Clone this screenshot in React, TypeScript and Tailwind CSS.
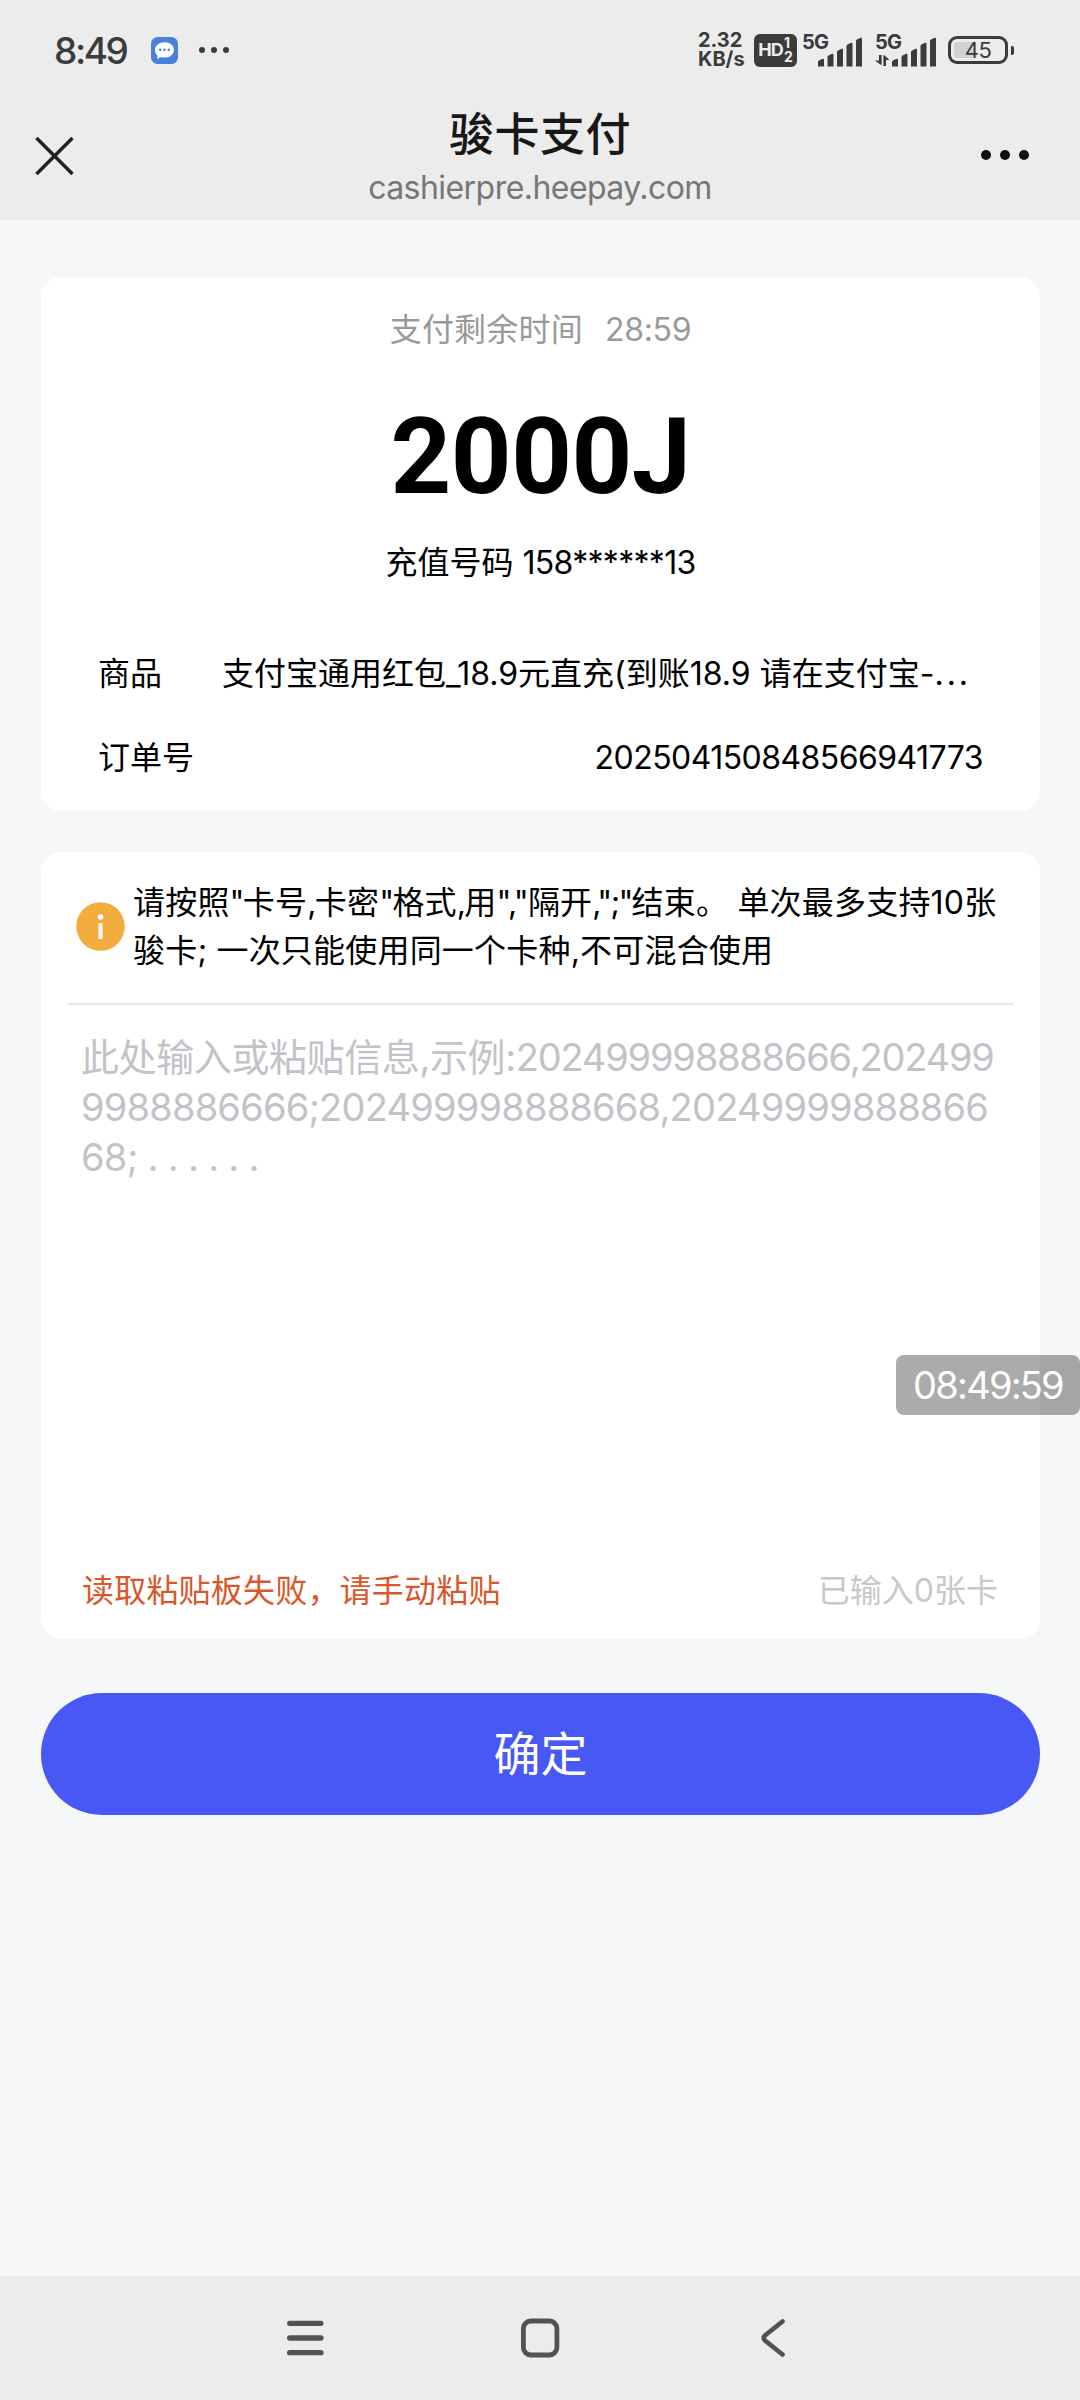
import type { ReactNode } from 'react'

const ORDER = {
  countdown: '28:59',
  amount: '2000J',
  account: '158******13',
  orderNo: '202504150848566941773',
}

const BARS = [7, 12, 17, 23, 28]

function SignalBars() {
  return (
    <svg width="44" height="30" viewBox="0 0 44 30" fill="#3b3b3b">
      {BARS.map((h, i) => (
        <path key={h} d={`M${i * 9.5} 29v${-(h - 3)}q0-1 1-1.6l3.6-1.6q1.4-.4 1.4 1V29q0 .5-.5.5h-5q-.5 0-.5-.5z`} />
      ))}
    </svg>
  )
}

// Ponctuation latine resserrée entre les caractères chinois
function P({ children }: { children: ReactNode }) {
  return <span className="tracking-[-1.7px]">{children}</span>
}

function StatusBar() {
  return (
    <div className="flex h-[100px] items-center pl-[54px] pr-[66px] text-[#3b3b3b]">
      <span className="w-[97px] text-[37px] font-medium leading-none tracking-[-2.4px]">8:49</span>
      <svg width="27" height="27" viewBox="0 0 27 27">
        <rect width="27" height="27" rx="6.5" fill="#4a80d8" />
        <path d="M13.5 5.2c5.4 0 9.4 3.3 9.4 7.7s-4 7.7-9.4 7.7c-1.7 0-3.3-.1-4.5-.7-.8 1-1.7 1.7-3 2 .5-1.2.7-2.2.4-3.5C4.8 16.9 4 15.1 4 12.9c0-4.4 4.1-7.7 9.5-7.7z" fill="#fff" />
        <circle cx="9.2" cy="12.7" r="1.2" fill="#4a80d8" />
        <circle cx="13.5" cy="12.7" r="1.2" fill="#4a80d8" />
        <circle cx="17.8" cy="12.7" r="1.2" fill="#4a80d8" />
      </svg>
      <div className="ml-[21px] flex gap-1.5">
        <i className="size-1.5 rounded-full bg-[#3b3b3b]" />
        <i className="size-1.5 rounded-full bg-[#3b3b3b]" />
        <i className="size-1.5 rounded-full bg-[#3b3b3b]" />
      </div>

      <div className="ml-auto flex items-center">
        <div className="w-[56px] text-[20px] font-bold leading-[19px]">
          <p>2.32</p>
          <p>KB/s</p>
        </div>
        <div className="flex h-[33px] w-[43px] items-center justify-center rounded-[6px] bg-[#3b3b3b] text-[#ececec]">
          <span className="text-[18px] font-bold leading-none tracking-[-0.8px]">HD</span>
          <span className="ml-px text-[14px] font-bold leading-[14px]">1<br />2</span>
        </div>
        <div className="ml-[5px] flex h-[33px] w-[61px] items-end">
          <span className="w-[16px] self-start text-[20px] font-bold leading-[17px] tracking-[-0.8px]">5G</span>
          <SignalBars />
        </div>
        <div className="ml-[12px] flex h-[33px] w-[61px] items-end">
          <div className="flex h-full w-[17px] flex-col justify-between">
            <span className="text-[20px] font-bold leading-[17px] tracking-[-0.8px]">5G</span>
            <svg width="15" height="13" viewBox="0 0 15 13" fill="#3b3b3b">
              <path d="M4 1h2.6v9.5L6 11 0 6.5h4zM8.4 12V1.5L9 1l5.5 5H11v6z" />
            </svg>
          </div>
          <SignalBars />
        </div>
        <div className="ml-[12px] flex items-center gap-[3px]">
          <div className="flex h-[28px] w-[60px] items-center justify-center rounded-[9px] border-[3px] border-[#3b3b3b] bg-[linear-gradient(90deg,#d2d2d2_0,#d2d2d2_45%,transparent_45%)] bg-clip-content p-[3px]">
            <span className="text-[22px] font-normal leading-none tracking-[-0.5px]">45</span>
          </div>
          <i className="h-[9px] w-[3px] rounded-r-[2px] bg-[#3b3b3b]" />
        </div>
      </div>
    </div>
  )
}

function TitleBar() {
  return (
    <div className="flex h-[120px] items-start justify-between pl-[35px] pr-[51px]">
      <svg className="mt-[36px]" width="39" height="40" viewBox="0 0 39 40" stroke="#222" strokeWidth="3.5">
        <path d="M1.5 2l36 36M37.5 2l-36 36" />
      </svg>
      <div className="mt-[5px] flex flex-col items-center pl-[25px]">
        <h1 className="text-[45px] font-medium leading-[60px] tracking-[0.5px] text-[#181818]">骏卡支付</h1>
        <p className="text-[32px] leading-[46px] tracking-[-0.55px] text-[#777]">cashierpre.heepay.com</p>
      </div>
      <div className="mt-[50px] flex gap-[9px]">
        <i className="size-2.5 rounded-full bg-[#111]" />
        <i className="size-2.5 rounded-full bg-[#111]" />
        <i className="size-2.5 rounded-full bg-[#111]" />
      </div>
    </div>
  )
}

function OrderCard() {
  return (
    <section className="flex h-[534px] flex-col items-center rounded-[20px] bg-white text-[32px] leading-[48px] text-black">
      <p className="mt-[29px] text-[#999]">
        <span className="tracking-[0.2px]">支付剩余时间</span>
        <span className="ml-[22px] tracking-[-0.3px]">{ORDER.countdown}</span>
      </p>
      <p className="mt-[43px] font-[Roboto] text-[106px] font-bold leading-[120px] tracking-[-0.5px]">{ORDER.amount}</p>
      <p className="mt-[22px]">充值号码 <span className="tracking-[-0.7px]">{ORDER.account}</span></p>
      <div className="mt-[63px] flex w-full pl-[57px]">
        <span className="w-[124px] shrink-0">商品</span>
        <span className="whitespace-nowrap">支付宝通用红包_18.9元直充(到账18.9 请在支付宝-<span className="tracking-[3px]">...</span></span>
      </div>
      <div className="mt-[36px] flex w-full justify-between px-[57px]">
        <span>订单号</span>
        <span className="tracking-[-0.55px]">{ORDER.orderNo}</span>
      </div>
    </section>
  )
}

function CardInput() {
  return (
    <section className="mt-[41px] flex h-[787px] flex-col rounded-[20px] bg-white px-[27px]">
      <div className="flex h-[153px] items-center border-b-2 border-[#e8e8e8] pb-[2px] pl-[8px]">
        <svg width="49" height="49" viewBox="0 0 49 49">
          <circle cx="24.5" cy="24.5" r="24.3" fill="#f2ad3d" />
          <circle cx="24.5" cy="15" r="2.8" fill="#fff" />
          <rect x="22.5" y="21" width="4" height="16" rx=".8" fill="#fff" />
        </svg>
        <div className="ml-[8px] whitespace-nowrap text-[32px] leading-[48px] tracking-[0.2px] text-black">
          <p>
            请按照<P>"</P>卡号<P>,</P>卡密<P>"</P>格式<P>,</P>用<span className="tracking-[-0.8px]">","</span>隔开<P>,";"</P>结束。 单次最多支持10张
          </p>
          <p>骏卡; 一次只能使用同一个卡种,不可混合使用</p>
        </div>
      </div>
      <div className="mt-[27px] flex-1 whitespace-nowrap pl-[13px] text-[38px] leading-[50px] text-[#c2c3c8]">
        <p><span className="tracking-[-0.4px]">此处输入或粘贴信息,示例:</span><span className="tracking-[-1.2px]">202499998888666,202499</span></p>
        <p className="tracking-[-0.8px]">9988886666;202499998888668,20249999888866</p>
        <p className="tracking-[-0.7px]">68; . . . . . .</p>
      </div>
      <div className="mb-[24px] flex justify-between pl-[14px] pr-[15px] text-[32px] leading-[48px]">
        <span className="tracking-[0.2px] text-[#d9572b]">读取粘贴板失败，请手动粘贴</span>
        <span className="text-[#c8c8c8]">已输入0张卡</span>
      </div>
    </section>
  )
}

function NavBar() {
  return (
    <nav className="flex h-[124px] items-center bg-[#ececec] pl-[280px] text-[#525252]">
      <svg width="50" height="40" viewBox="0 0 50 40" stroke="currentColor" strokeWidth="5.3" strokeLinecap="round">
        <path d="M9.7 5.3h31.2M9.7 20h31.2M9.7 34.7h31.2" />
      </svg>
      <svg className="ml-[190px]" width="40" height="40" viewBox="0 0 40 40" fill="none" stroke="currentColor" strokeWidth="4.8">
        <rect x="3.4" y="3" width="33.5" height="34" rx="7.5" />
      </svg>
      <svg className="ml-[198px]" width="30" height="40" viewBox="0 0 30 40" fill="none" stroke="currentColor" strokeWidth="4.6" strokeLinecap="round">
        <path d="M24.5 3.5L7 17.5q-2.5 2.5 0 5l17.5 14" />
      </svg>
    </nav>
  )
}

export default function App() {
  return (
    <div className="relative flex h-[2400px] w-[1080px] flex-col bg-[#f6f7f9] font-[Inter,'Noto_Sans_CJK_SC',sans-serif]">
      <header className="bg-[#ececec]">
        <StatusBar />
        <TitleBar />
      </header>
      <main className="flex-1 pl-[41px] pr-[40px] pt-[57px]">
        <OrderCard />
        <CardInput />
        <button className="mt-[54px] h-[122px] w-full rounded-full bg-[#4758f5] text-[47px] text-white">确定</button>
      </main>
      <NavBar />

      {/* Horodatage flottant */}
      <div className="absolute right-0 top-[1355px] flex h-[60px] w-[184px] items-center justify-center rounded-[8px] bg-black/33 text-[38px] tracking-[-1.8px] text-white">
        08:49:59
      </div>
    </div>
  )
}
